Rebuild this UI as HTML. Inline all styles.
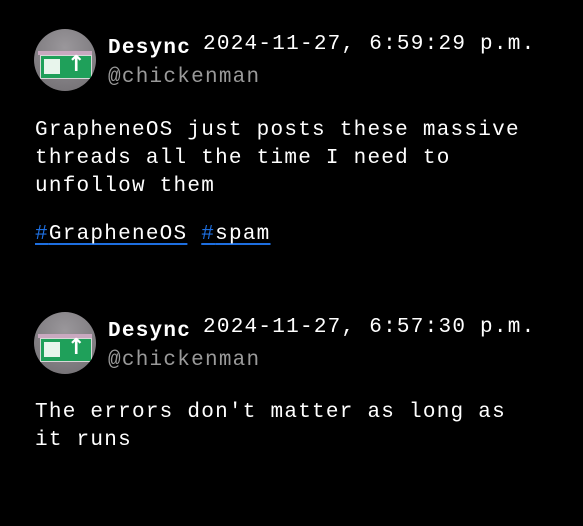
<!DOCTYPE html>
<html><head><style>
html,body{margin:0;padding:0;background:#000;width:583px;height:526px;overflow:hidden}
body{font-family:"Liberation Mono","DejaVu Sans Mono",monospace;color:#fff;font-size:21px;letter-spacing:1.25px;position:relative}
.t{position:absolute;white-space:pre;line-height:28px}
.av{position:absolute;width:62px;height:62px;border-radius:50%;background:radial-gradient(circle at 50% 30%,#9a979b,#6f6c70);overflow:hidden}
.av .bar{position:absolute;left:4px;top:22px;width:54px;height:4px;background:#c9a9c0}
.av .sign{position:absolute;left:6px;top:26px;width:50px;height:22px;background:#1fa05a;border:1px solid #d8d8d8}
.av .sign:before{content:"";position:absolute;left:3px;top:3px;width:16px;height:15px;background:#e8f5ec}
.av .sign:after{content:"↑";position:absolute;left:26px;top:-4px;color:#fff;font:bold 22px "DejaVu Sans",sans-serif}
.name{font-weight:bold}
.gray{color:#9a9a9a}
.tag{color:#fff;text-decoration:underline;text-decoration-color:#1e6fe0;text-decoration-thickness:2px;text-underline-offset:4px}
.h{color:#1e6fe0}
</style></head><body>
<div class="av" style="left:34px;top:29px"><div class="bar"></div><div class="sign"></div></div>
<div class="t name" style="left:108px;top:35px">Desync</div>
<div class="t" style="left:203px;top:31px">2024-11-27, 6:59:29 p.m.</div>
<div class="t gray" style="left:108px;top:64px">@chickenman</div>
<div class="t" style="left:35px;top:117px">GrapheneOS just posts these massive
threads all the time I need to
unfollow them</div>
<div class="t" style="left:35px;top:221px"><span class="tag"><span class="h">#</span>GrapheneOS</span> <span class="tag"><span class="h">#</span>spam</span></div>

<div class="av" style="left:34px;top:312px"><div class="bar"></div><div class="sign"></div></div>
<div class="t name" style="left:108px;top:318px">Desync</div>
<div class="t" style="left:203px;top:314px">2024-11-27, 6:57:30 p.m.</div>
<div class="t gray" style="left:108px;top:347px">@chickenman</div>
<div class="t" style="left:35px;top:399px">The errors don't matter as long as
it runs</div>
</body></html>
